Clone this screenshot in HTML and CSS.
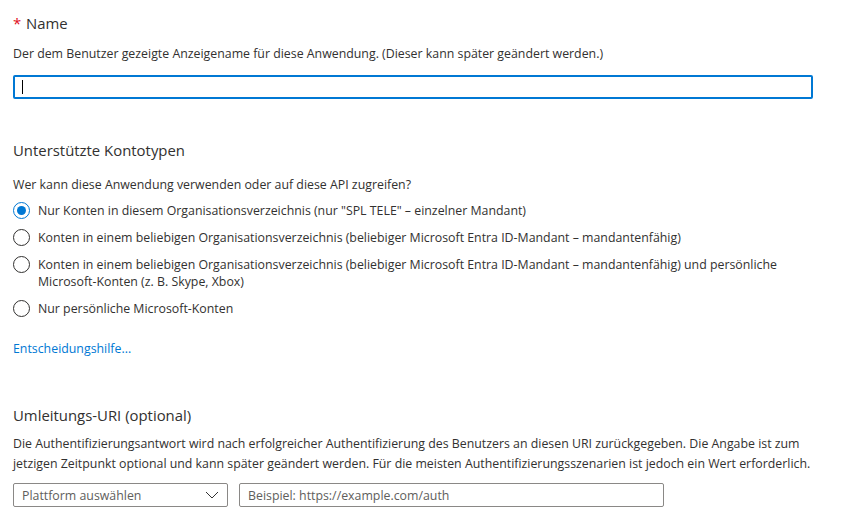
FILE: index.html
```html
<!DOCTYPE html>
<html lang="de">
<head>
<meta charset="utf-8">
<link rel="stylesheet" href="styles.css">
</head>
<body>
<main class="form">
  <section class="section sec-name">
    <h2 class="heading"><span class="req">*</span> Name</h2>
    <p class="desc">Der dem Benutzer gezeigte Anzeigename für diese Anwendung. (Dieser kann später geändert werden.)</p>
    <div class="textbox focused"><span class="caret"></span></div>
  </section>

  <section class="section sec-types">
    <h2 class="heading">Unterstützte Kontotypen</h2>
    <p class="desc q">Wer kann diese Anwendung verwenden oder auf diese API zugreifen?</p>
    <ul class="radios">
      <li class="radio-row"><span class="radio checked"></span><span class="rlabel">Nur Konten in diesem Organisationsverzeichnis (nur "SPL TELE" – einzelner Mandant)</span></li>
      <li class="radio-row"><span class="radio"></span><span class="rlabel">Konten in einem beliebigen Organisationsverzeichnis (beliebiger Microsoft Entra ID-Mandant – mandantenfähig)</span></li>
      <li class="radio-row"><span class="radio"></span><span class="rlabel">Konten in einem beliebigen Organisationsverzeichnis (beliebiger Microsoft Entra ID-Mandant – mandantenfähig) und persönliche Microsoft-Konten (z. B. Skype, Xbox)</span></li>
      <li class="radio-row"><span class="radio"></span><span class="rlabel">Nur persönliche Microsoft-Konten</span></li>
    </ul>
    <a class="link" href="#">Entscheidungshilfe...</a>
  </section>

  <section class="section sec-uri">
    <h2 class="heading">Umleitungs-URI (optional)</h2>
    <p class="desc para">Die Authentifizierungsantwort wird nach erfolgreicher Authentifizierung des Benutzers an diesen URI zurückgegeben. Die Angabe ist zum jetzigen Zeitpunkt optional und kann später geändert werden. Für die meisten Authentifizierungsszenarien ist jedoch ein Wert erforderlich.</p>
    <div class="uri-row">
      <div class="select"><span class="ph">Plattform auswählen</span>
        <svg class="chev" width="14" height="8" viewBox="0 0 14 8"><path d="M1 1 L7 7 L13 1" fill="none" stroke="#333" stroke-width="1"/></svg>
      </div>
      <div class="textbox uri"><span class="ph">Beispiel: https://example.com/auth</span></div>
    </div>
  </section>
</main>
</body>
</html>
```
FILE: styles.css
```css
* { box-sizing: border-box; }
html, body { margin: 0; padding: 0; background: #fff; }
body {
  font-family: "Open Sans", "Noto Sans", sans-serif;
  font-size: 12.35px;
  color: #323130;
}
.form { padding: 13px 13px 0 13px; width: 843px; }
.section { display: flex; flex-direction: column; }
.heading {
  margin: 0;
  font-size: 14.9px;
  font-weight: 400;
  line-height: 20px;
  color: #323130;
}
.req { color: #e00b1c; margin-right: 1px; }
.desc { margin: 0; line-height: 18px; }
.sec-name .desc { margin-top: 12px; }
.textbox {
  height: 24px;
  border: 1px solid #8a8886;
  border-radius: 2px;
  display: flex;
  align-items: center;
  padding: 0 8px;
}
.textbox.focused {
  margin-top: 12px;
  width: 800px;
  border: 2px solid #0078d4;
  padding-left: 7px;
}
.caret { width: 1px; height: 14px; background: #000; }
.sec-types { margin-top: 41px; }
.q { margin-top: 16px; }
.radios { list-style: none; margin: 8px 0 0 0; padding: 0; display: flex; flex-direction: column; gap: 10px; }
.radio-row { display: flex; align-items: flex-start; gap: 8px; line-height: 17px; }
.radio {
  flex: none;
  width: 17px; height: 17px;
  border: 1.3px solid #323130;
  border-radius: 50%;
  position: relative;
}
.radio.checked { border-color: #0078d4; }
.radio.checked::after {
  content: "";
  position: absolute;
  left: 50%; top: 50%;
  width: 9px; height: 9px;
  margin: -4.5px 0 0 -4.5px;
  border-radius: 50%;
  background: #0078d4;
}
.rlabel { max-width: 770px; }
.link { margin-top: 23px; color: #0078d4; text-decoration: none; line-height: 18px; align-self: flex-start; }
.sec-uri { margin-top: 47px; }
.para { margin-top: 9px; line-height: 20px; max-width: 810px; }
.uri-row { display: flex; gap: 11px; margin-top: 9px; }
.select {
  width: 215px; height: 24px;
  border: 1px solid #8a8886;
  border-radius: 2px;
  display: flex; align-items: center; justify-content: space-between;
  padding: 0 8px 0 8px;
}
.ph { color: #605e5c; }
.textbox.uri { width: 425px; }
```
